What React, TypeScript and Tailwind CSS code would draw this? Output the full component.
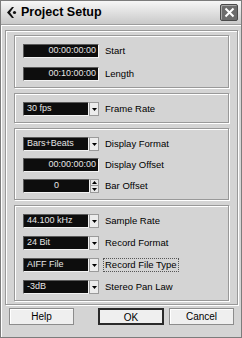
import React from "react";

type Row =
  | { kind: "time"; value: string; label: string }
  | { kind: "select"; value: string; label: string; focus?: boolean }
  | { kind: "spin"; value: string; label: string };

const groups: { gap: string; rows: Row[] }[] = [
  {
    gap: "gap-[9px]",
    rows: [
      { kind: "time", value: "00:00:00:00", label: "Start" },
      { kind: "time", value: "00:10:00:00", label: "Length" },
    ],
  },
  { gap: "gap-[8px]", rows: [{ kind: "select", value: "30 fps", label: "Frame Rate" }] },
  {
    gap: "gap-[7px]",
    rows: [
      { kind: "select", value: "Bars+Beats", label: "Display Format" },
      { kind: "time", value: "00:00:00:00", label: "Display Offset" },
      { kind: "spin", value: "0", label: "Bar Offset" },
    ],
  },
  {
    gap: "gap-[8px]",
    rows: [
      { kind: "select", value: "44.100 kHz", label: "Sample Rate" },
      { kind: "select", value: "24 Bit", label: "Record Format" },
      { kind: "select", value: "AIFF File", label: "Record File Type", focus: true },
      { kind: "select", value: "-3dB", label: "Stereo Pan Law" },
    ],
  },
];

function Arrow({ up }: { up?: boolean }) {
  return (
    <svg width="5" height="3" viewBox="0 0 5 3">
      <path d={up ? "M0 3 L2.5 0 L5 3 Z" : "M0 0 L5 0 L2.5 3 Z"} fill="#000" />
    </svg>
  );
}

function Control({ row }: { row: Row }) {
  const box =
    "h-[14px] bg-[#0d0d0d] border border-t-[#5a5a5a] border-l-[#5a5a5a] border-b-[#f2f2f2] border-r-[#f2f2f2] text-[9px] text-[#e6e6e6] flex items-center";
  if (row.kind === "time") {
    return <div className={`${box} w-[76px] justify-end pr-[2px]`}>{row.value}</div>;
  }
  if (row.kind === "spin") {
    return (
      <div className="flex w-[76px]">
        <div className={`${box} w-[67px] justify-center`}>{row.value}</div>
        <div className="flex flex-col w-[9px] h-[14px]">
          <div className="h-[7px] bg-[#e8e8e8] border border-[#9a9a9a] flex items-center justify-center">
            <Arrow up />
          </div>
          <div className="h-[7px] bg-[#e8e8e8] border border-t-0 border-[#9a9a9a] flex items-center justify-center">
            <Arrow />
          </div>
        </div>
      </div>
    );
  }
  return (
    <div className="flex w-[76px]">
      <div className={`${box} w-[66px] pl-[3px]`}>{row.value}</div>
      <div className="w-[10px] h-[14px] bg-[#ececec] border border-[#9a9a9a] flex items-center justify-center">
        <Arrow />
      </div>
    </div>
  );
}

export default function App() {
  return (
    <div
      className="w-[242px] h-[338px] bg-[#d4d4d4] border border-[#7c7c7c] flex flex-col overflow-hidden"
      style={{ fontFamily: '"Liberation Sans", Arial, sans-serif' }}
    >
      <div className="h-[24px] shrink-0 flex items-center justify-between pl-[4px] pr-[3px] bg-gradient-to-b from-[#f7f7f7] to-[#c9c9c9] border-b border-[#9c9c9c]">
        <div className="flex items-center gap-[3px]">
          <svg width="13" height="13" viewBox="0 0 13 13">
            <path d="M7 1 L2 6.5 L7 12 L9 12 L5 6.5 L9 1 Z" fill="#111" />
            <circle cx="9.5" cy="6.5" r="1.6" fill="#111" />
          </svg>
          <span className="text-[12.5px] font-bold text-black">Project Setup</span>
        </div>
        <div className="w-[18px] h-[17px] rounded-[2px] bg-[#6c6c6c] border border-[#4a4a4a] shadow-[inset_1px_1px_0_#a8a8a8] flex items-center justify-center">
          <svg width="11" height="11" viewBox="0 0 11 11">
            <path d="M1.5 1.5 L9.5 9.5 M9.5 1.5 L1.5 9.5" stroke="#fff" strokeWidth="2" />
          </svg>
        </div>
      </div>

      <div className="flex-1 flex flex-col px-[3px] pt-[4px] border-l border-t border-white">
        <div className="flex flex-col gap-[5px] px-[8px] pt-[4px] pb-[3px] border border-[#999] shadow-[inset_1px_1px_0_#fff,1px_1px_0_#fff]">
          {groups.map((g, i) => (
            <div
              key={i}
              className={`flex flex-col ${g.gap} pl-[8px] pt-[8px] pb-[6px] border border-[#999] shadow-[inset_1px_1px_0_#fff,1px_1px_0_#fff]`}
            >
              {g.rows.map((row) => (
                <div key={row.label} className="flex items-center gap-[5px]">
                  <Control row={row} />
                  <span
                    className={`text-[9.5px] text-black leading-[12px] px-[1px] ${
                      row.kind === "select" && row.focus ? "outline outline-1 outline-dotted outline-[#555]" : ""
                    }`}
                  >
                    {row.label}
                  </span>
                </div>
              ))}
            </div>
          ))}
        </div>

        <div className="flex items-center mt-[3px] px-[4px]">
          <button className="w-[65px] h-[17px] text-[10px] text-black bg-[#efefef] border border-[#8c8c8c] shadow-[inset_1px_1px_0_#fff]">
            Help
          </button>
          <button className="ml-[24px] w-[66px] h-[17px] text-[10px] text-black bg-[#efefef] border-2 border-[#2a2a2a]">
            OK
          </button>
          <button className="ml-[5px] w-[65px] h-[17px] text-[10px] text-black bg-[#efefef] border border-[#8c8c8c] shadow-[inset_1px_1px_0_#fff]">
            Cancel
          </button>
        </div>
      </div>
    </div>
  );
}
